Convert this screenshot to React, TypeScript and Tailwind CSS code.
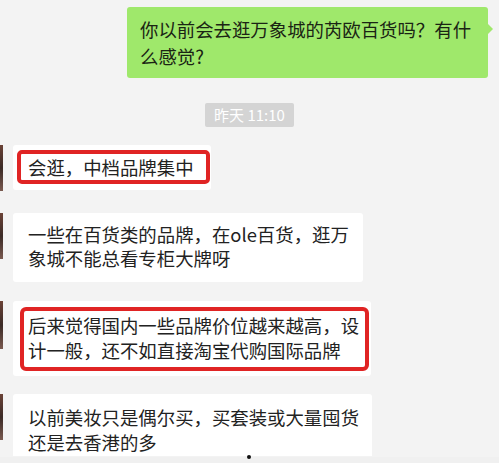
import React from "react";

const font = { fontFamily: '"Noto Sans CJK SC", "Noto Sans", sans-serif' };

function Avatar({ h }: { h: number }) {
  return (
    <div
      className="w-[3px] shrink-0 bg-gradient-to-b from-[#6b4236] via-[#3b2a26] to-[#7a5a50]"
      style={{ height: h }}
    />
  );
}

export default function App() {
  return (
    <div
      className="relative w-[499px] h-[463px] overflow-hidden bg-[#f3f3f3] text-[#222] flex flex-col"
      style={font}
    >
      {/* outgoing green bubble */}
      <div className="flex justify-end pr-[11px] pt-[7px]">
        <div className="relative w-[361px] h-[71px] rounded-[3px] bg-[#9fe86b] pl-[13px] pt-[9px] text-[18.4px] leading-[27px] text-[#1a2414]">
          你以前会去逛万象城的芮欧百货吗？有什
          <br />
          么感觉?
          <div className="absolute right-[-5px] top-[17px] w-0 h-0 border-y-[5px] border-y-transparent border-l-[5px] border-l-[#9fe86b]" />
        </div>
      </div>

      {/* timestamp */}
      <div className="flex justify-center mt-[25px]">
        <div className="h-[24px] w-[89px] rounded-[2px] bg-[#d4d4d4] text-white text-[15px] leading-[24px] text-center">
          昨天 11:10
        </div>
      </div>

      {/* bubble 1 */}
      <div className="flex items-start mt-[18px]">
        <Avatar h={46} />
        <div className="ml-[10px] w-[198px] h-[45px] rounded-[3px] bg-white pl-[4px] pr-[1px] pt-[5px]">
          <div className="h-[34px] rounded-[5px] border-[4px] border-[#e02424] pl-[7px] text-[18.4px] leading-[26px] whitespace-nowrap">
            会逛，中档品牌集中
          </div>
        </div>
      </div>

      {/* bubble 2 */}
      <div className="flex items-start mt-[22px]">
        <Avatar h={46} />
        <div className="ml-[10px] w-[350px] h-[69px] rounded-[3px] bg-white pl-[15px] pt-[9px] text-[18.4px] leading-[24px] whitespace-nowrap">
          一些在百货类的品牌，在ole百货，逛万
          <br />
          象城不能总看专柜大牌呀
        </div>
      </div>

      {/* bubble 3 */}
      <div className="flex items-start mt-[19px]">
        <Avatar h={48} />
        <div className="ml-[10px] w-[358px] h-[75px] rounded-[3px] bg-white pl-[7px] pr-[2px] pt-[6px]">
          <div className="h-[64px] rounded-[6px] border-[4px] border-[#e02424] pl-[4px] pt-[2px] text-[18.4px] leading-[25px] whitespace-nowrap">
            后来觉得国内一些品牌价位越来越高，设
            <br />
            计一般，还不如直接淘宝代购国际品牌
          </div>
        </div>
      </div>

      {/* bubble 4 */}
      <div className="flex items-start mt-[18px]">
        <Avatar h={46} />
        <div className="ml-[10px] w-[359px] h-[62px] rounded-t-[3px] bg-white pl-[15px] pt-[11px] text-[18.4px] leading-[25px] whitespace-nowrap">
          以前美妆只是偶尔买，买套装或大量囤货
          <br />
          还是去香港的多
        </div>
      </div>

      <div className="absolute left-0 right-0 bottom-0 h-[6px] bg-[#f0f0f0]" />
      <div className="absolute left-[247px] top-[455px] w-[4px] h-[4px] rounded-full bg-[#111]" />
    </div>
  );
}
